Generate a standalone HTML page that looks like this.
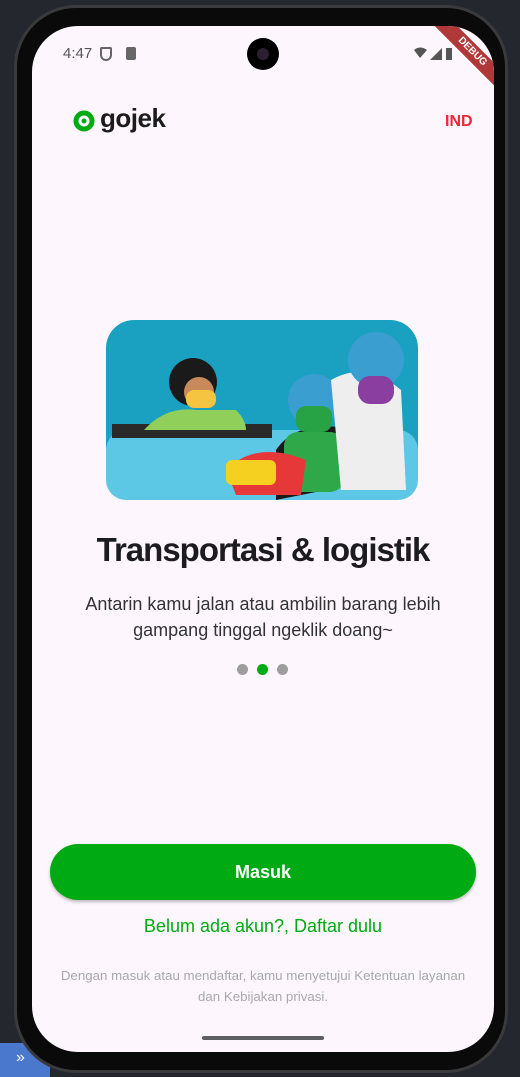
<!DOCTYPE html>
<html><head><meta charset="utf-8"><style>
*{margin:0;padding:0;box-sizing:border-box}
body{width:520px;height:1077px;background:#24272d;position:relative;overflow:hidden;font-family:"Liberation Sans",sans-serif}
.phone{position:absolute;left:14px;top:5px;width:494px;height:1068px;border-radius:62px;background:#0a0a0a;border:3px solid #3a3a3c}
.screen{position:absolute;left:32px;top:26px;width:462px;height:1026px;border-radius:46px;background:#fdf7fd;overflow:hidden}
.abs{position:absolute}
</style></head><body>
<div class="abs" style="left:0;top:1043px;width:50px;height:34px;background:#4a78cc;color:#fff;font-size:16px;padding:6px 0 0 16px">»</div>
<div class="phone"></div>
<div class="screen">
 <div class="abs" style="left:31px;top:19px;font-size:15px;color:#555">4:47</div>
 <div class="abs" style="left:68px;top:21px;width:12px;height:14px;border:2px solid #666;border-radius:2px 2px 7px 7px"></div>
 <div class="abs" style="left:94px;top:21px;width:10px;height:13px;background:#666;border-radius:2px"></div>
 <div class="abs" style="left:215px;top:12px;width:32px;height:32px;border-radius:50%;background:#000"></div>
 <div class="abs" style="left:225px;top:22px;width:12px;height:12px;border-radius:50%;background:#2a2030"></div>
 <svg class="abs" style="left:380px;top:20px" width="40" height="16"><path d="M2 4 Q8 -1 15 4 L8 12Z" fill="#555"/><path d="M30 2 L30 14 L18 14Z" fill="#555"/><rect x="34" y="2" width="6" height="12" fill="#555"/></svg>
 <div class="abs" style="left:390px;top:18px;width:100px;height:16px;background:#b03838;color:#fff;font-size:10px;font-weight:bold;text-align:center;line-height:16px;transform:rotate(45deg);transform-origin:center">DEBUG</div>
 <svg class="abs" style="left:41px;top:84px" width="22" height="22"><circle cx="11" cy="11" r="8" fill="none" stroke="#00aa13" stroke-width="5"/><circle cx="11" cy="11" r="2.5" fill="#00aa13"/></svg>
 <div class="abs" style="left:68px;top:77px;font-size:26px;font-weight:bold;color:#1c1c1c;letter-spacing:-0.5px">gojek</div>
 <div class="abs" style="left:413px;top:87px;font-size:16px;font-weight:bold;color:#ee2737">IND</div>
 <svg class="abs" style="left:74px;top:294px" width="312" height="180">
  <rect x="0" y="0" width="312" height="180" rx="28" fill="#1aa0c0"/>
  <rect x="0" y="110" width="312" height="70" rx="20" fill="#5cc8e6"/>
  <rect x="6" y="104" width="160" height="14" fill="#2a2a2a"/>
  <circle cx="87" cy="62" r="24" fill="#1a1a1a"/><circle cx="93" cy="72" r="15" fill="#c88a5a"/>
  <rect x="80" y="70" width="30" height="18" rx="8" fill="#f5c440"/>
  <path d="M38 110 Q60 86 90 90 L130 90 Q140 100 140 110Z" fill="#8fcf5a"/>
  <path d="M170 130 Q190 100 240 108 L270 160 L170 180Z" fill="#1a1a1a"/>
  <rect x="178" y="112" width="60" height="60" rx="14" fill="#2fa84a"/>
  <circle cx="208" cy="80" r="26" fill="#3a9ed0"/><rect x="190" y="86" width="36" height="26" rx="10" fill="#27a244"/>
  <path d="M225 60 Q260 40 295 70 L300 170 L235 170Z" fill="#eee"/>
  <circle cx="270" cy="40" r="28" fill="#3a9ed0"/><rect x="252" y="56" width="36" height="28" rx="12" fill="#8a3fa0"/>
  <path d="M120 150 Q150 120 200 140 L195 175 L130 175Z" fill="#e63838"/>
  <rect x="120" y="140" width="50" height="25" rx="6" fill="#f5d020"/>
 </svg>
 <div class="abs" style="left:0;top:505px;width:462px;text-align:center;font-size:33px;font-weight:bold;color:#1c1b1f;letter-spacing:-1px">Transportasi &amp; logistik</div>
 <div class="abs" style="left:0;top:565px;width:462px;text-align:center;font-size:18px;line-height:26px;color:#333">Antarin kamu jalan atau ambilin barang lebih<br>gampang tinggal ngeklik doang~</div>
 <div class="abs" style="left:205px;top:638px;width:11px;height:11px;border-radius:50%;background:#9e9e9e"></div>
 <div class="abs" style="left:225px;top:638px;width:11px;height:11px;border-radius:50%;background:#00aa13"></div>
 <div class="abs" style="left:245px;top:638px;width:11px;height:11px;border-radius:50%;background:#9e9e9e"></div>
 <div class="abs" style="left:18px;top:818px;width:426px;height:56px;border-radius:28px;background:#00aa13;color:#fff;font-size:18px;font-weight:bold;text-align:center;line-height:56px;box-shadow:0 2px 3px rgba(0,0,0,.25)">Masuk</div>
 <div class="abs" style="left:0;top:890px;width:462px;text-align:center;font-size:18px;color:#00aa13">Belum ada akun?, Daftar dulu</div>
 <div class="abs" style="left:0;top:939px;width:462px;text-align:center;font-size:13.3px;line-height:21px;color:#a8a8a8">Dengan masuk atau mendaftar, kamu menyetujui Ketentuan layanan<br>dan Kebijakan privasi.</div>
 <div class="abs" style="left:170px;top:1010px;width:122px;height:4px;border-radius:2px;background:#5e5e62"></div>
</div>
</body></html>
